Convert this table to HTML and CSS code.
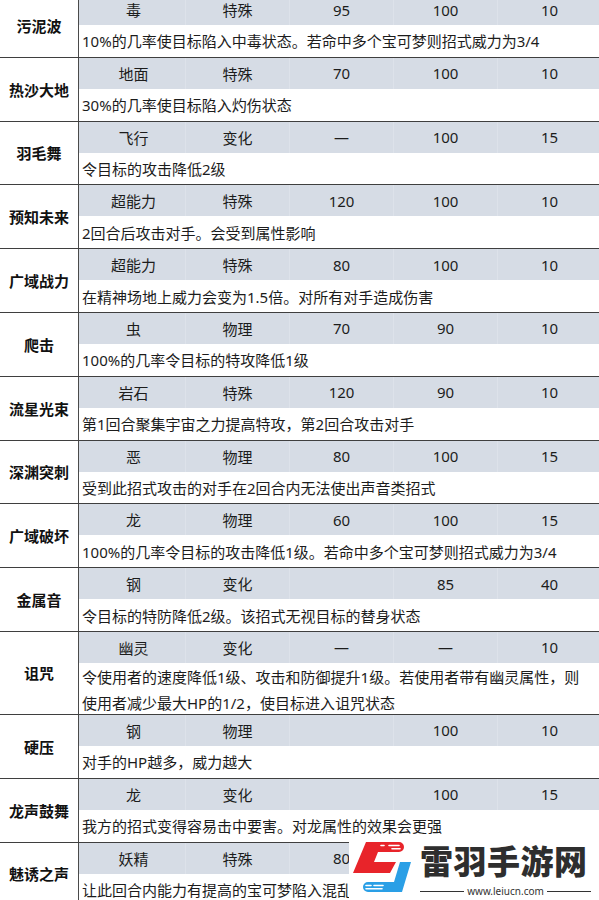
FILE: index.html
```html
<!DOCTYPE html>
<html lang="zh">
<head>
<meta charset="utf-8">
<title>招式表</title>
<link rel="stylesheet" href="styles.css">
</head>
<body>
<div class="table">
  <div class="row"><div class="name">污泥波</div><div class="body"><div class="stats"><span>毒</span><span>特殊</span><span>95</span><span>100</span><span>10</span></div><div class="desc">10%的几率使目标陷入中毒状态。若命中多个宝可梦则招式威力为3/4</div></div></div>
  <div class="row"><div class="name">热沙大地</div><div class="body"><div class="stats"><span>地面</span><span>特殊</span><span>70</span><span>100</span><span>10</span></div><div class="desc">30%的几率使目标陷入灼伤状态</div></div></div>
  <div class="row"><div class="name">羽毛舞</div><div class="body"><div class="stats"><span>飞行</span><span>变化</span><span>—</span><span>100</span><span>15</span></div><div class="desc">令目标的攻击降低2级</div></div></div>
  <div class="row"><div class="name">预知未来</div><div class="body"><div class="stats"><span>超能力</span><span>特殊</span><span>120</span><span>100</span><span>10</span></div><div class="desc">2回合后攻击对手。会受到属性影响</div></div></div>
  <div class="row"><div class="name">广域战力</div><div class="body"><div class="stats"><span>超能力</span><span>特殊</span><span>80</span><span>100</span><span>10</span></div><div class="desc">在精神场地上威力会变为1.5倍。对所有对手造成伤害</div></div></div>
  <div class="row"><div class="name">爬击</div><div class="body"><div class="stats"><span>虫</span><span>物理</span><span>70</span><span>90</span><span>10</span></div><div class="desc">100%的几率令目标的特攻降低1级</div></div></div>
  <div class="row"><div class="name">流星光束</div><div class="body"><div class="stats"><span>岩石</span><span>特殊</span><span>120</span><span>90</span><span>10</span></div><div class="desc">第1回合聚集宇宙之力提高特攻，第2回合攻击对手</div></div></div>
  <div class="row"><div class="name">深渊突刺</div><div class="body"><div class="stats"><span>恶</span><span>物理</span><span>80</span><span>100</span><span>15</span></div><div class="desc">受到此招式攻击的对手在2回合内无法使出声音类招式</div></div></div>
  <div class="row"><div class="name">广域破坏</div><div class="body"><div class="stats"><span>龙</span><span>物理</span><span>60</span><span>100</span><span>15</span></div><div class="desc">100%的几率令目标的攻击降低1级。若命中多个宝可梦则招式威力为3/4</div></div></div>
  <div class="row"><div class="name">金属音</div><div class="body"><div class="stats"><span>钢</span><span>变化</span><span></span><span>85</span><span>40</span></div><div class="desc">令目标的特防降低2级。该招式无视目标的替身状态</div></div></div>
  <div class="row"><div class="name">诅咒</div><div class="body"><div class="stats"><span>幽灵</span><span>变化</span><span>—</span><span>—</span><span>10</span></div><div class="desc two">令使用者的速度降低1级、攻击和防御提升1级。若使用者带有幽灵属性，则<br>使用者减少最大HP的1/2，使目标进入诅咒状态</div></div></div>
  <div class="row"><div class="name">硬压</div><div class="body"><div class="stats"><span>钢</span><span>物理</span><span></span><span>100</span><span>10</span></div><div class="desc">对手的HP越多，威力越大</div></div></div>
  <div class="row"><div class="name">龙声鼓舞</div><div class="body"><div class="stats"><span>龙</span><span>变化</span><span></span><span>100</span><span>15</span></div><div class="desc">我方的招式变得容易击中要害。对龙属性的效果会更强</div></div></div>
  <div class="row"><div class="name">魅诱之声</div><div class="body"><div class="stats"><span>妖精</span><span>特殊</span><span>80</span><span></span><span></span></div><div class="desc">让此回合内能力有提高的宝可梦陷入混乱</div></div></div>
</div>

<div class="watermark">
  <svg class="logo" width="62" height="56" viewBox="0 0 62 56">
    <path d="M14,2 L47,2 A5,5 0 0 1 47,12 L26,12 L22,22 L44,22 L38,33 L1,33 Z" fill="#e8242a"/>
    <g stroke="#fff" stroke-width="1.6" stroke-linecap="round">
      <line x1="29" y1="5.5" x2="32" y2="5.5"/>
      <line x1="37" y1="5.5" x2="47" y2="5.5"/>
      <line x1="40" y1="8.8" x2="48" y2="8.8"/>
    </g>
    <path d="M48,22 L59,22 L50,52 L16,52 A5,5 0 0 1 16,42 L42,42 Z" fill="#2a9fe6"/>
    <g stroke="#fff" stroke-width="1.6" stroke-linecap="round">
      <line x1="14" y1="45.5" x2="19" y2="45.5"/>
      <line x1="22" y1="45.5" x2="31" y2="45.5"/>
      <line x1="14" y1="48.8" x2="30" y2="48.8"/>
    </g>
  </svg>
  <div class="brand">
    <div class="brand-name">雷羽手游网</div>
    <div class="brand-url"><span class="rule"></span><span class="url">www.leiucn.com</span><span class="rule"></span></div>
  </div>
</div>
</body>
</html>
```

FILE: styles.css
```css
html, body {
  margin: 0;
  padding: 0;
  background: #ffffff;
}
body {
  width: 599px;
  height: 900px;
  overflow: hidden;
  position: relative;
  font-family: "Noto Sans", "Noto Sans CJK SC", sans-serif;
  color: #1c1c1c;
}
.table {
  margin-top: -6px;
  display: flex;
  flex-direction: column;
}
.row {
  display: flex;
  border-bottom: 1px solid #3f3f3f;
}
.name {
  width: 78px;
  flex: none;
  border-right: 1px solid #4a4a4a;
  display: flex;
  align-items: center;
  justify-content: center;
  font-family: "Noto Sans CJK SC", sans-serif;
  font-weight: 700;
  font-size: 15px;
  color: #111;
}
.body {
  flex: 1;
  display: flex;
  flex-direction: column;
  min-width: 0;
}
.stats {
  height: 31px;
  background: #d6dce5;
  display: grid;
  grid-template-columns: repeat(5, 104px);
  padding-left: 3px;
  font-size: 15px;
  overflow: hidden;
}
.stats span {
  display: flex;
  align-items: center;
  justify-content: center;
  border-right: 1px solid #dde2ea;
}
.desc {
  height: 31.8px;
  display: flex;
  align-items: center;
  padding-left: 3px;
  font-size: 15px;
  white-space: nowrap;
  background: #ffffff;
}
.desc.two {
  display: block;
  white-space: normal;
  line-height: 26px;
  padding-top: 1px;
  box-sizing: border-box;
  height: 51px;
}
.watermark {
  position: absolute;
  left: 349px;
  top: 839px;
  width: 250px;
  height: 61px;
  background: #ffffff;
  display: flex;
  align-items: flex-start;
}
.logo {
  margin-left: 3px;
  margin-top: 1px;
  flex: none;
}
.brand {
  margin-left: 6px;
  margin-top: 2px;
  display: flex;
  flex-direction: column;
  width: 171px;
}
.brand-name {
  font-family: "Noto Sans CJK SC", sans-serif;
  font-weight: 900;
  font-size: 33px;
  line-height: 38px;
  color: #2e2e2e;
  letter-spacing: 0.5px;
  white-space: nowrap;
}
.brand-url {
  display: flex;
  align-items: center;
  margin-top: 6px;
  gap: 3px;
}
.rule {
  flex: 1;
  height: 1px;
  background: #333;
}
.url {
  font-family: "Noto Sans", sans-serif;
  font-size: 10px;
  line-height: 12px;
  color: #333;
}
```
